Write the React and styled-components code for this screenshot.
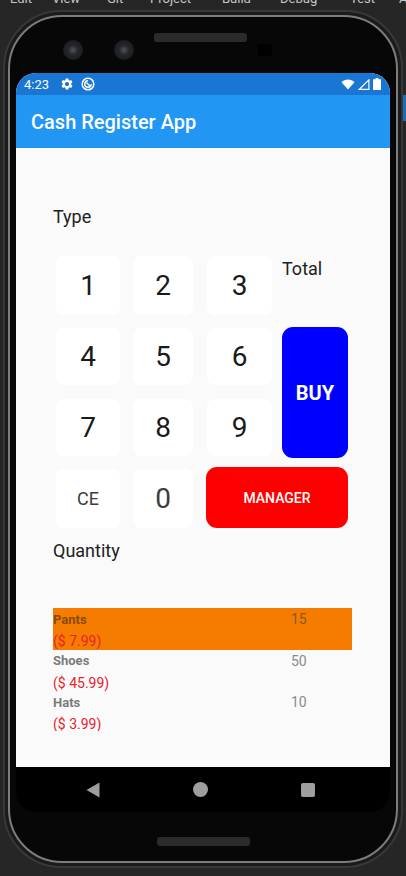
import React from "react"
import styled, { createGlobalStyle } from "styled-components"
import { MdSettings } from "react-icons/md"

const GlobalStyle = createGlobalStyle`
html, body {
    margin: 0;
    padding: 0;
    background: #262626;
    overflow: hidden;
}
* {
    box-sizing: border-box;
}
`

const products = [
    { name: "Pants", qty: 15, price: 7.99, selected: true },
    { name: "Shoes", qty: 50, price: 45.99 },
    { name: "Hats", qty: 10, price: 3.99 },
]

const menu = [
    ["Edit", 10],
    ["View", 52],
    ["Git", 107],
    ["Project", 150],
    ["Build", 222],
    ["Debug", 280],
    ["Test", 350],
    ["A", 399],
]

export default function App() {
    return (
        <Page>
            <GlobalStyle />
            <MenuBar>
                {menu.map(([label, left]) => (
                    <MenuItem key={label} $left={left}>{label}</MenuItem>
                ))}
            </MenuBar>
            <SideTab />
            <Frame>
                <Ring>
                    <TopBezel>
                        <Camera />
                        <Camera $second />
                        <Speaker $top />
                        <Sensor />
                    </TopBezel>
                    <Screen>
                        <StatusBar>
                            <Time>4:23</Time>
                            <MdSettings size={14} color="#fff" />
                            <svg width="14" height="14" viewBox="0 0 14 14" fill="none" stroke="#fff">
                                <circle cx="7" cy="7" r="5.8" strokeWidth="1.5" />
                                <path d="M7 3.8a3.2 3.2 0 1 0 3.2 3.2" strokeWidth="1.4" />
                                <path d="M5.4 5.6 9.6 9.8" strokeWidth="1.4" />
                            </svg>
                            <StatusRight>
                                <svg width="14" height="11" viewBox="0 0 14 11">
                                    <path d="M0.5 3.2C2.2 1.6 4.4 0.6 7 0.6s4.8 1 6.5 2.6L7 10.6z" fill="#fff" />
                                </svg>
                                <svg width="12" height="11" viewBox="0 0 12 11" fill="none" stroke="#fff">
                                    <path d="M1.4 10.3 10.9 0.9V10.3z" strokeWidth="1.2" />
                                </svg>
                                <svg width="8" height="12" viewBox="0 0 8 12">
                                    <path d="M2.6 0h2.8v1.2H7.6a.4.4 0 0 1 .4.4v10a.4.4 0 0 1-.4.4H.4a.4.4 0 0 1-.4-.4v-10a.4.4 0 0 1 .4-.4h2.2z" fill="#fff" />
                                </svg>
                            </StatusRight>
                        </StatusBar>
                        <AppBar>Cash Register App</AppBar>
                        <Content>
                            <Label>Type</Label>
                            <Keypad>
                                <Key $w={64} $h={59}>1</Key>
                                <Key $w={60} $h={59}>2</Key>
                                <Key $w={65} $h={59}>3</Key>
                                <Total>Total</Total>
                                <Key $w={64} $h={57}>4</Key>
                                <Key $w={60} $h={57}>5</Key>
                                <Key $w={65} $h={57}>6</Key>
                                <BuyButton>BUY</BuyButton>
                                <Key $w={64} $h={57}>7</Key>
                                <Key $w={60} $h={57}>8</Key>
                                <Key $w={65} $h={57}>9</Key>
                                <Key $w={64} $h={59} $small>CE</Key>
                                <Key $w={60} $h={59} $dim>0</Key>
                                <ManagerButton>MANAGER</ManagerButton>
                            </Keypad>
                            <QuantityLabel>Quantity</QuantityLabel>
                            <List>
                                {products.map((p) => (
                                    <Item key={p.name} $selected={p.selected}>
                                        <ItemTop>
                                            <ItemName $selected={p.selected}>{p.name}</ItemName>
                                            <ItemQty $selected={p.selected}>{p.qty}</ItemQty>
                                        </ItemTop>
                                        <ItemPrice>($ {p.price})</ItemPrice>
                                    </Item>
                                ))}
                            </List>
                        </Content>
                    </Screen>
                    <NavBar>
                        <svg width="14" height="16" viewBox="0 0 14 16">
                            <path d="M13.5 0.5V15.5L0.5 8z" fill="#9e9e9e" />
                        </svg>
                        <NavCircle />
                        <NavSquare />
                    </NavBar>
                    <BottomBezel>
                        <Speaker />
                    </BottomBezel>
                </Ring>
            </Frame>
        </Page>
    )
}

const Page = styled.div`
position: relative;
width: 406px;
height: 876px;
padding-top: 10px;
background: #262626;
overflow: hidden;
font-family: Roboto, "Noto Sans", sans-serif;
`

const MenuBar = styled.div`
position: absolute;
top: 0;
left: 0;
width: 406px;
height: 6px;
overflow: hidden;
`

const MenuItem = styled.span`
position: absolute;
left: ${(p) => p.$left}px;
bottom: 1px;
font-size: 13px;
line-height: 13px;
color: #c8c8c8;
`

const SideTab = styled.div`
position: absolute;
top: 95px;
left: 403px;
width: 3px;
height: 26px;
background: #1c6fb5;
`

const Frame = styled.div`
width: 400px;
height: 858px;
margin-left: 3px;
padding: 3px;
background: #1b1b1b;
border: 2px solid #383838;
border-radius: 58px;
`

const Ring = styled.div`
height: 100%;
padding: 0 6px;
background: #070707;
border: 2px solid #7c7c7c;
border-radius: 54px;
`

const TopBezel = styled.div`
display: flex;
align-items: flex-start;
height: 56px;
`

const Camera = styled.div`
width: 20px;
height: 20px;
margin-top: 23px;
margin-left: ${(p) => (p.$second ? 31 : 47)}px;
border-radius: 50%;
background: radial-gradient(circle, #50555a 0, #24262a 35%, #16171a 100%);
`

const Speaker = styled.div`
width: 93px;
height: 9px;
margin-top: ${(p) => (p.$top ? 16 : 0)}px;
margin-left: ${(p) => (p.$top ? 20 : 0)}px;
border-radius: 3px;
background: #2b2b2b;
`

const Sensor = styled.div`
width: 14px;
height: 12px;
margin-top: 27px;
margin-left: 11px;
border-radius: 4px 4px 1px 1px;
background: #000;
`

const Screen = styled.div`
display: flex;
flex-direction: column;
height: 694px;
background: #fafafa;
border-radius: 20px 20px 0 0;
overflow: hidden;
`

const StatusBar = styled.div`
display: flex;
align-items: center;
gap: 7px;
flex: 0 0 22px;
padding: 0 9px 0 8px;
background: #1976d2;
color: #fff;
`

const Time = styled.span`
margin-right: 4px;
font-size: 13px;
`

const StatusRight = styled.div`
display: flex;
align-items: center;
gap: 3px;
margin-left: auto;
`

const AppBar = styled.div`
display: flex;
align-items: center;
flex: 0 0 53px;
padding-left: 15px;
background: #2196f3;
color: #fff;
font-size: 20px;
font-weight: 500;
`

const Content = styled.div`
flex: 1;
min-height: 0;
padding: 57px 38px 0 37px;
overflow: hidden;
`

const Label = styled.div`
height: 24px;
font-size: 18px;
line-height: 24px;
color: #212121;
`

const Keypad = styled.div`
display: grid;
grid-template-columns: 77px 74px 75px 66px;
grid-template-rows: 72px 71px 70px 59px;
margin-top: 27px;
margin-left: 3px;
`

const Key = styled.button`
width: ${(p) => p.$w}px;
height: ${(p) => p.$h}px;
padding: 0;
background: #fff;
border: 0;
border-radius: 8px;
font-family: Roboto, sans-serif;
font-size: ${(p) => (p.$small ? 18 : 28)}px;
color: ${(p) => (p.$small || p.$dim ? "#3d3d3d" : "#1a1a1a")};
`

const Total = styled.div`
font-size: 18px;
line-height: 24px;
margin-top: 1px;
color: #212121;
`

const BuyButton = styled.button`
grid-column: 4;
grid-row: 2 / span 2;
height: 131px;
margin-top: -1px;
padding: 0;
background: #0000ff;
border: 0;
border-radius: 11px;
font-family: Roboto, sans-serif;
font-size: 20px;
font-weight: 700;
color: #fff;
`

const ManagerButton = styled.button`
grid-column: 3 / span 2;
align-self: end;
height: 61px;
margin-left: -1px;
padding: 0;
background: #ff0000;
border: 0;
border-radius: 11px;
font-family: Roboto, sans-serif;
font-size: 14px;
font-weight: 500;
color: #fff;
`

const QuantityLabel = styled(Label)`
margin-top: 11px;
`

const List = styled.div`
height: 123px;
margin-top: 45px;
overflow: hidden;
`

const Item = styled.div`
height: 41.5px;
padding-top: 1px;
background: ${(p) => (p.$selected ? "#f57c00" : "transparent")};
`

const ItemTop = styled.div`
display: flex;
height: 20px;
align-items: center;
`

const ItemName = styled.span`
width: 238px;
font-size: 13px;
font-weight: 700;
color: ${(p) => (p.$selected ? "#8a4a08" : "#7a7a7a")};
`

const ItemQty = styled.span`
font-size: 14px;
color: ${(p) => (p.$selected ? "#8a5a20" : "#8a8a8a")};
`

const ItemPrice = styled.div`
margin-top: 3px;
font-size: 14px;
line-height: 18px;
color: #e8232a;
`

const NavBar = styled.div`
display: flex;
align-items: center;
height: 45px;
padding-left: 70px;
gap: 93px;
background: #000;
border-radius: 0 0 20px 20px;
`

const NavCircle = styled.div`
width: 15px;
height: 15px;
border-radius: 50%;
background: #9e9e9e;
`

const NavSquare = styled.div`
width: 14px;
height: 14px;
border-radius: 2px;
background: #9e9e9e;
`

const BottomBezel = styled.div`
display: flex;
justify-content: center;
padding-top: 25px;
`
